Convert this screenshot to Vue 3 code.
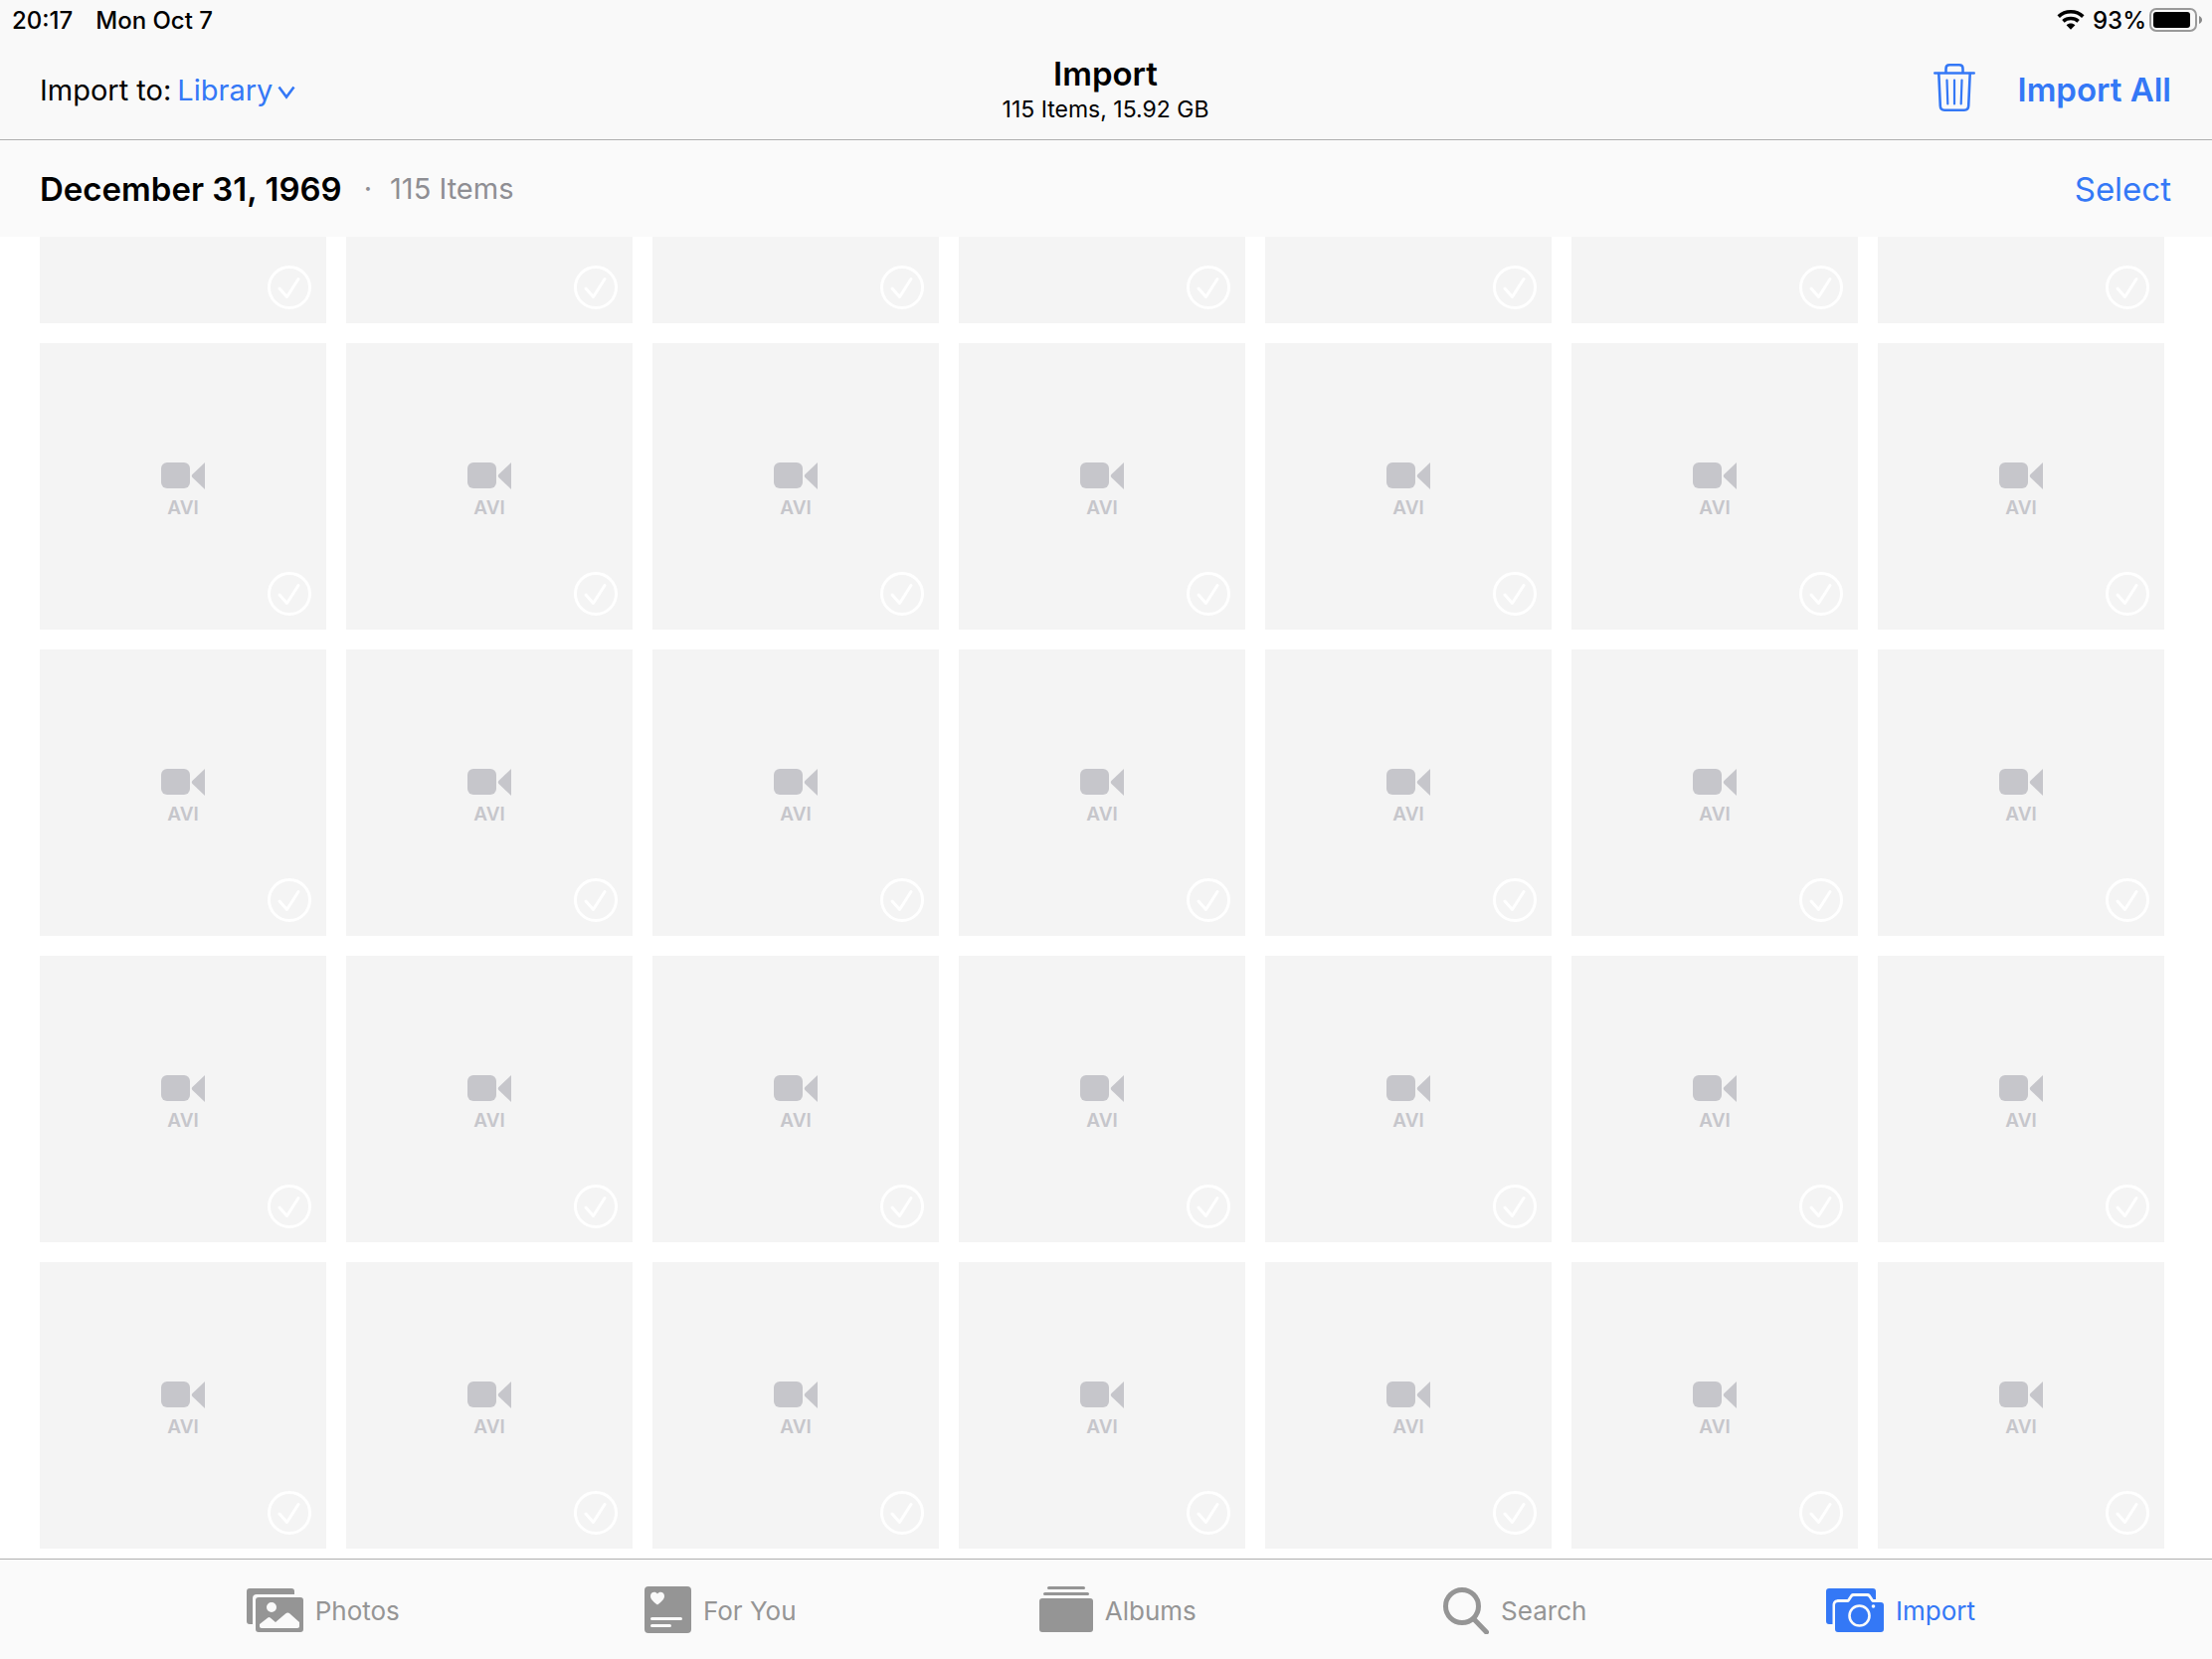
<template>
  <div class="import-page">
    <header class="top">
      <div class="status-bar">
        <div class="status-left">
          <span>20:17</span>
          <span>Mon Oct 7</span>
        </div>
        <div class="status-right">
          <svg class="wifi" width="28" height="20" viewBox="0 0 28 20">
            <path d="M1.700 6.600C8.400.2 19.600.2 26.300 6.600M6.400 11.400C10.600 7.600 17.400 7.600 21.600 11.400" fill="none" stroke="#000" stroke-width="3.600" />
            <path d="M14 19.800l-4.400-4.600c2.500-2.100 6.300-2.100 8.800 0z" />
          </svg>
          <span>93%</span>
          <svg class="battery" width="53" height="24" viewBox="0 0 53 24">
            <rect x="1" y="1" width="46" height="22" rx="6" fill="none" stroke="#9a9a9a" stroke-width="2" />
            <rect x="4" y="4" width="37" height="16" rx="3" />
            <path d="M50 8c4 1.400 4 6.600 0 8z" fill="#8a8a8a" />
          </svg>
        </div>
      </div>
      <div class="nav-bar">
        <div class="destination">
          <label for="destination">Import to:</label>
          <select id="destination" v-model="destination">
            <option>Library</option>
          </select>
          <svg class="chevron" width="18" height="14" viewBox="0 0 18 14">
            <path d="M1.500 1.500L9 11.500l7.500-10" fill="none" stroke="#3478f6" stroke-width="2.600" />
          </svg>
        </div>
        <div class="title">
          <h1>Import</h1>
          <p>115 Items, 15.92 GB</p>
        </div>
        <div class="actions">
          <button type="button" class="delete-button" aria-label="Delete">
            <svg width="42" height="48" viewBox="0 0 42 48" fill="none" stroke="#3478f6" stroke-width="2.600" stroke-linecap="round" stroke-linejoin="round">
              <path d="M1.300 9.500h39.400M12.500 9V5c0-2.200 1.400-3.700 3.600-3.700h9.800c2.200 0 3.600 1.500 3.600 3.700v4" />
              <path d="M5.300 10l1.500 32.500c.1 2.500 1.700 4.200 4.200 4.200h20c2.500 0 4.100-1.700 4.200-4.200L36.700 10" />
              <path d="M13.500 16.500l.8 24M21 16.500v24M28.500 16.500l-.8 24" stroke-width="2.200" />
            </svg>
          </button>
          <button type="button" class="import-all" @click="importAll">Import All</button>
        </div>
      </div>
    </header>

    <div class="section-bar">
      <h2>December 31, 1969</h2>
      <span class="dot">·</span>
      <span class="count">115 Items</span>
      <button type="button" class="select-button">Select</button>
    </div>

    <main class="content">
      <ul class="grid">
        <li v-for="item in items" :key="item.id" class="tile">
          <template v-if="item.inView">
            <svg width="44" height="27" viewBox="0 0 44 27" fill="#c6c6cb">
              <rect width="29" height="26" rx="6" />
              <path d="M44 0v27L31.400 15c-.8-.8-.8-2.200 0-3z" />
            </svg>
            <span>{{ item.type }}</span>
          </template>
          <label class="check">
            <input v-model="item.selected" type="checkbox" :aria-label="'Select item ' + item.id" />
            <svg width="44" height="44" viewBox="0 0 44 44">
              <path d="M12 23l7.500 8.500L31 13.500" fill="none" stroke="#fff" stroke-width="3" stroke-linecap="round" stroke-linejoin="round" />
            </svg>
          </label>
        </li>
      </ul>
    </main>

    <nav class="tab-bar">
      <a href="#photos">
        <svg width="57" height="48" viewBox="0 0 57 48" fill="currentColor">
          <path d="M3 2h42c2 0 3 1 3 3v3H10c-2.500 0-4 1.500-4 4v26H3c-2 0-3-1-3-3V5c0-2 1-3 3-3z" />
          <path fill-rule="evenodd" d="M12 11h42c2 0 3 1 3 3v29c0 2-1 3-3 3H12c-2 0-3-1-3-3V14c0-2 1-3 3-3zM25 16a5 5 0 1 0 0 10 5 5 0 0 0 0-10zM13 38v2c0 1.300.7 2 2 2h36c1.300 0 2-.7 2-2v-4l-9.500-8.500c-1.500-1.300-3-1.300-4.500 0L29 36l-5-4.300c-1-.9-2-.9-3 0z" />
        </svg>
        <span>Photos</span>
      </a>
      <a href="#for-you">
        <svg width="47" height="48" viewBox="0 0 47 48">
          <rect width="47" height="47" rx="4" fill="currentColor" />
          <path d="M13 18.500C8 14.500 6 12.500 6 9.700 6 5.500 11 4.500 13 7.500c2-3 7-2 7 2.200 0 2.800-2 4.800-7 8.800z" fill="#fafafa" />
          <path d="M7.500 32.500h29M7.500 39.500h18" stroke="#fafafa" stroke-width="3" stroke-linecap="round" />
        </svg>
        <span>For You</span>
      </a>
      <a href="#albums">
        <svg width="54" height="48" viewBox="0 0 54 48" fill="currentColor">
          <rect x="8" width="38" height="3" rx="1.500" />
          <rect x="4" y="6" width="46" height="3" rx="1.500" />
          <rect y="12" width="54" height="34" rx="3" />
        </svg>
        <span>Albums</span>
      </a>
      <a href="#search">
        <svg width="46" height="48" viewBox="0 0 46 48" fill="none" stroke="currentColor" stroke-linecap="round">
          <circle cx="19" cy="20" r="16.500" stroke-width="5" />
          <path d="M31 33l12.500 13" stroke-width="5" />
        </svg>
        <span>Search</span>
      </a>
      <a href="#import" class="active">
        <svg width="58" height="48" viewBox="0 0 58 48" fill="currentColor">
          <path d="M3 2h44c2 0 3 1 3 3v8h-2.500l-3-4.500C43.700 7.300 42.500 7 41 7H28c-1.500 0-2.700.3-3.500 1.500L21.500 13H13c-4 0-6.500 2-6.500 6v19H3c-2 0-3-1-3-3V5c0-2 1-3 3-3z" />
          <path d="M12 16h9.500c1 0 1.700-.4 2.200-1.200l2.300-3.600c.5-.8 1.200-1.200 2.200-1.200h12.600c1 0 1.700.4 2.200 1.200l2.300 3.600c.5.800 1.200 1.200 2.200 1.200H55c2 0 3 1 3 3v24c0 2-1 3-3 3H12c-2 0-3-1-3-3V19c0-2 1-3 3-3z" />
          <circle cx="33.500" cy="29.500" r="10" fill="none" stroke="#fafafa" stroke-width="2.600" />
          <circle cx="47.500" cy="20" r="1.800" fill="#fafafa" />
        </svg>
        <span>Import</span>
      </a>
    </nav>
  </div>
</template>

<script setup>
import { ref } from 'vue';

const destination = ref('Library');

// the first row is mostly scrolled under the date bar
const items = ref(
  Array.from({ length: 35 }, (_, i) => ({
    id: i + 1,
    type: 'AVI',
    selected: false,
    inView: i >= 7,
  }))
);

const importAll = () => {
  items.value.forEach((item) => {
    item.selected = true;
  });
};
</script>

<style>
body {
  margin: 0;
}
</style>

<style scoped>
.import-page,
.import-page * {
  box-sizing: border-box;
}
.import-page {
  display: flex;
  flex-direction: column;
  height: 100vh;
  overflow: hidden;
  background: #ffffff;
  color: #000000;
  font-family: Inter, "Liberation Sans", sans-serif;
}
h1,
h2,
p,
ul {
  margin: 0;
  padding: 0;
}
button,
select {
  appearance: none;
  border: 0;
  padding: 0;
  background: none;
  color: #3478f6;
  font-family: inherit;
  cursor: pointer;
}
svg {
  display: block;
  flex-shrink: 0;
}
.top {
  flex-shrink: 0;
  background: #f9f9f9;
  border-bottom: 1px solid #b0b0b0;
}
.status-bar {
  display: flex;
  justify-content: space-between;
  height: 40px;
  padding: 0 10px 0 12px;
  font-size: 24px;
  font-weight: 500;
}
.status-left,
.status-right {
  display: flex;
  align-items: center;
}
.status-left {
  gap: 23px;
}
.wifi {
  margin-right: 8px;
}
.battery {
  margin-left: 3px;
}
.nav-bar {
  display: grid;
  grid-template-columns: 1fr auto 1fr;
  align-items: center;
  height: 100px;
  padding: 0 41px 0 40px;
}
.destination {
  display: flex;
  align-items: center;
  font-size: 29px;
}
.destination select {
  margin-left: 6px;
  font-size: 29px;
}
.chevron {
  margin: 6px 0 0 4px;
}
.title {
  text-align: center;
}
.title h1 {
  font-size: 33px;
  font-weight: 600;
  line-height: 40px;
}
.title p {
  font-size: 23px;
  line-height: 32px;
}
.actions {
  display: flex;
  align-items: center;
  justify-content: flex-end;
  gap: 43px;
}
.delete-button {
  padding-bottom: 4px;
}
.import-all {
  font-size: 33px;
  font-weight: 600;
}
.section-bar {
  display: flex;
  flex-shrink: 0;
  align-items: center;
  height: 97px;
  padding: 0 41px 0 40px;
  background: #fafafa;
}
.section-bar h2 {
  font-size: 33px;
  font-weight: 600;
}
.dot,
.count {
  color: #8e8e93;
  font-size: 29px;
}
.dot {
  margin: 0 18px 0 22px;
}
.select-button {
  margin-left: auto;
  font-size: 33px;
}
.content {
  display: flex;
  flex: 1;
  flex-direction: column;
  justify-content: flex-end;
  min-height: 0;
  overflow: hidden;
  padding: 0 48px 10px 40px;
}
.grid {
  display: grid;
  grid-template-columns: repeat(7, 1fr);
  gap: 20px;
  list-style: none;
}
.tile {
  position: relative;
  display: flex;
  flex-direction: column;
  align-items: center;
  justify-content: center;
  gap: 7px;
  aspect-ratio: 1;
  padding-top: 9px;
  background: #f4f4f4;
  color: #c6c6cb;
  font-size: 19px;
  font-weight: 600;
  line-height: 24px;
}
.check {
  position: absolute;
  right: 15px;
  bottom: 14px;
  width: 44px;
  height: 44px;
}
.check input {
  appearance: none;
  position: absolute;
  inset: 0;
  margin: 0;
  border: 3px solid #ffffff;
  border-radius: 50%;
}
.check input:checked {
  background: #3478f6;
}
.check svg {
  position: relative;
}
.tab-bar {
  display: grid;
  grid-template-columns: repeat(4, 1fr) 376px;
  flex-shrink: 0;
  height: 101px;
  padding: 2px 125px 0;
  background: #fafafa;
  border-top: 1px solid #b0b0b0;
}
.tab-bar a {
  display: flex;
  align-items: center;
  justify-content: center;
  gap: 12px;
  color: #959595;
  font-size: 26px;
  text-decoration: none;
}
.tab-bar a.active {
  color: #3478f6;
}
</style>
